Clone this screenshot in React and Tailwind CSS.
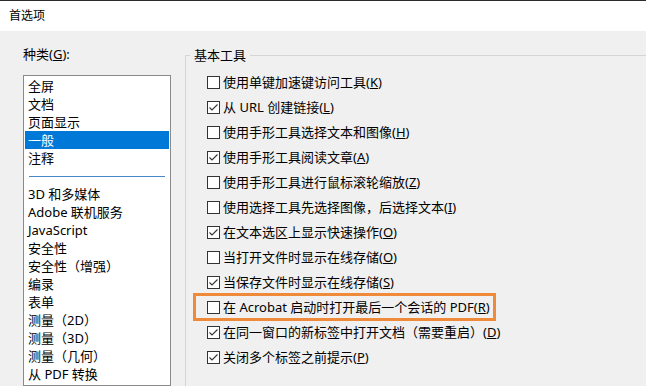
import React from 'react';

const categories = [
  '全屏',
  '文档',
  '页面显示',
  '一般',
  '注释',
  '---',
  '3D 和多媒体',
  'Adobe 联机服务',
  'JavaScript',
  '安全性',
  '安全性（增强）',
  '编录',
  '表单',
  '测量（2D）',
  '测量（3D）',
  '测量（几何）',
  '从 PDF 转换',
  '转换为 PDF',
];

const options = [
  { label: '使用单键加速键访问工具', key: 'K', checked: false },
  { label: '从 URL 创建链接', key: 'L', checked: true },
  { label: '使用手形工具选择文本和图像', key: 'H', checked: false },
  { label: '使用手形工具阅读文章', key: 'A', checked: true },
  { label: '使用手形工具进行鼠标滚轮缩放', key: 'Z', checked: false },
  { label: '使用选择工具先选择图像，后选择文本', key: 'I', checked: false },
  { label: '在文本选区上显示快速操作', key: 'O', checked: true },
  { label: '当打开文件时显示在线存储', key: 'O', checked: false },
  { label: '当保存文件时显示在线存储', key: 'S', checked: true },
  { label: '在 Acrobat 启动时打开最后一个会话的 PDF', key: 'R', checked: false, marked: true },
  { label: '在同一窗口的新标签中打开文档（需要重启）', key: 'D', checked: true },
  { label: '关闭多个标签之前提示', key: 'P', checked: true },
];

function Checkbox({ checked }) {
  return (
    <span className="flex items-center justify-center w-[13px] h-[13px] border border-[#333333] bg-white shrink-0">
      {checked && (
        <svg width="11" height="11" viewBox="0 0 11 11" fill="none">
          <path d="M1.5 5.5 L4 8 L9.5 2.5" stroke="#333333" strokeWidth="1.1" />
        </svg>
      )}
    </span>
  );
}

export default function App() {
  return (
    <div className="w-[646px] h-[386px] overflow-hidden flex flex-col bg-[#f0f0f0] text-black font-['Noto_Sans','Noto_Sans_CJK_SC',sans-serif]">
      {/* Title bar */}
      <div className="h-[31px] shrink-0 bg-white border-t border-[#2b2b2b] flex items-center pl-[9px] text-[12px]">
        首选项
      </div>

      <div className="flex flex-1 min-h-0">
        {/* Category column */}
        <div className="ml-[23px] w-[148px] flex flex-col">
          <div className="mt-[14px] h-[18px] leading-[18px] text-[13px]">
            种类(<u>G</u>):
          </div>
          <div className="mt-[12px] flex-1 bg-white border border-[#8a8a8a] p-px overflow-hidden">
            {categories.map((c, i) =>
              c === '---' ? (
                <div key={i} className="h-[18px] flex items-center px-[4px]">
                  <div className="h-px w-full bg-[#4b8ac8]" />
                </div>
              ) : (
                <div
                  key={i}
                  className={`h-[18px] leading-[18px] pl-[3px] text-[13px] whitespace-nowrap ${
                    c === '一般' ? 'bg-[#0078d7] text-white' : ''
                  }`}
                >
                  {c}
                </div>
              )
            )}
          </div>
        </div>

        {/* Basic tools group */}
        <fieldset className="ml-[14px] mt-[15px] flex-1 border-t border-l border-[#d5d5d5] p-0 min-w-0">
          <legend className="ml-[4px] px-[4px] h-[18px] leading-[18px] text-[13px]">基本工具</legend>
          <div className="pl-[21px] pt-[6px]">
            {options.map((o, i) => (
              <div key={i} className="relative h-[25px] flex items-center text-[13px] whitespace-nowrap">
                <Checkbox checked={o.checked} />
                <span className="ml-[3px]">
                  {o.label}(<u>{o.key}</u>)
                </span>
                {o.marked && (
                  <div className="absolute left-[-14px] top-[-2px] w-[303px] h-[28px] border-[3px] border-[#ef8a3b]" />
                )}
              </div>
            ))}
          </div>
        </fieldset>
      </div>
    </div>
  );
}
